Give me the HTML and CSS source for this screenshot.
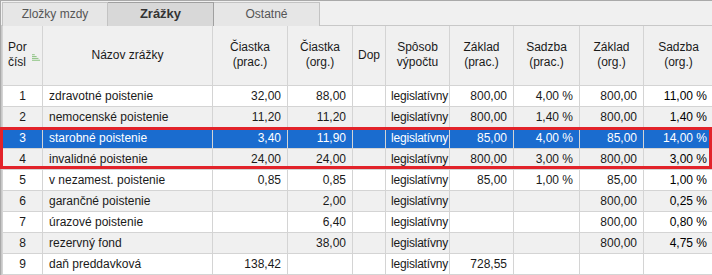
FILE: index.html
```html
<!DOCTYPE html>
<html lang="sk">
<head>
<meta charset="UTF-8" />
<title>Zrážky</title>
<link rel="stylesheet" href="styles.css">
</head>
<body>
  <div class="panel">
    <div class="tabs">
      <div class="tab"><span class="tab-label">Zložky mzdy</span></div>
      <div class="tab tab-active"><span class="tab-label">Zrážky</span></div>
      <div class="tab"><span class="tab-label">Ostatné</span></div>
    </div>

    <div class="grid-wrap">
      <table class="grid">
        <colgroup>
          <col class="c-por"><col class="c-name"><col class="c-amt1"><col class="c-amt2"><col class="c-dop">
          <col class="c-way"><col class="c-base1"><col class="c-rate1"><col class="c-base2"><col class="c-rate2">
        </colgroup>
        <thead>
          <tr>
            <th class="th-por">
              <div class="por-inner">
                <span>Por<br>čísl</span>
                <svg class="sort-icon" width="9" height="7" viewBox="0 0 9 7">
                  <path d="M0 0.5h3M0 2.5h5M0 4.5h7M0 6.5h9" stroke="#86c07a" stroke-width="1" />
                </svg>
              </div>
            </th>
            <th>Názov zrážky</th>
            <th>Čiastka<br>(prac.)</th>
            <th>Čiastka<br>(org.)</th>
            <th>Dop</th>
            <th>Spôsob<br>výpočtu</th>
            <th>Základ<br>(prac.)</th>
            <th>Sadzba<br>(prac.)</th>
            <th>Základ<br>(org.)</th>
            <th>Sadzba<br>(org.)</th>
          </tr>
        </thead>
        <tbody>
          <tr>
            <td class="num-c">1</td><td>zdravotné poistenie</td><td class="num">32,00</td><td class="num">88,00</td><td></td>
            <td class="way">legislatívny</td><td class="num">800,00</td><td class="num">4,00 %</td><td class="num">800,00</td><td class="num dark">11,00 %</td>
          </tr>
          <tr class="alt">
            <td class="num-c">2</td><td>nemocenské poistenie</td><td class="num">11,20</td><td class="num">11,20</td><td></td>
            <td class="way">legislatívny</td><td class="num">800,00</td><td class="num">1,40 %</td><td class="num">800,00</td><td class="num dark">1,40 %</td>
          </tr>
          <tr class="selected">
            <td class="num-c">3</td><td>starobné poistenie</td><td class="num">3,40</td><td class="num">11,90</td><td></td>
            <td class="way">legislatívny</td><td class="num">85,00</td><td class="num">4,00 %</td><td class="num">85,00</td><td class="num">14,00 %</td>
          </tr>
          <tr class="alt">
            <td class="num-c">4</td><td>invalidné poistenie</td><td class="num">24,00</td><td class="num">24,00</td><td></td>
            <td class="way">legislatívny</td><td class="num">800,00</td><td class="num">3,00 %</td><td class="num">800,00</td><td class="num dark">3,00 %</td>
          </tr>
          <tr>
            <td class="num-c">5</td><td>v nezamest. poistenie</td><td class="num">0,85</td><td class="num">0,85</td><td></td>
            <td class="way">legislatívny</td><td class="num">85,00</td><td class="num">1,00 %</td><td class="num">85,00</td><td class="num dark">1,00 %</td>
          </tr>
          <tr class="alt">
            <td class="num-c">6</td><td>garančné poistenie</td><td></td><td class="num">2,00</td><td></td>
            <td class="way">legislatívny</td><td></td><td></td><td class="num">800,00</td><td class="num dark">0,25 %</td>
          </tr>
          <tr>
            <td class="num-c">7</td><td>úrazové poistenie</td><td></td><td class="num">6,40</td><td></td>
            <td class="way">legislatívny</td><td></td><td></td><td class="num">800,00</td><td class="num dark">0,80 %</td>
          </tr>
          <tr class="alt">
            <td class="num-c">8</td><td>rezervný fond</td><td></td><td class="num">38,00</td><td></td>
            <td class="way">legislatívny</td><td></td><td></td><td class="num">800,00</td><td class="num dark">4,75 %</td>
          </tr>
          <tr>
            <td class="num-c">9</td><td>daň preddavková</td><td class="num">138,42</td><td></td><td></td>
            <td class="way">legislatívny</td><td class="num">728,55</td><td></td><td></td><td></td>
          </tr>
        </tbody>
      </table>
      <div class="mark"></div>
    </div>
  </div>
</body>
</html>
```

FILE: styles.css
```css
* {
  box-sizing: border-box;
}
body {
  margin: 0;
  background: #ffffff;
  font-family: "Liberation Sans", Tahoma, Arial, sans-serif;
  font-size: 12px;
  color: #1a1a1a;
  overflow: hidden;
}

/* Tabs */
.panel {
  width: 712px;
  border-top: 1px solid #a9a9a9;
  border-left: 1px solid #a9a9a9;
}
.tabs {
  display: flex;
  height: 25px;
  padding: 1px 0 0 1px;
  background: #f0f0f0;
  border-bottom: 1px solid #c8c8c8;
}
.tab {
  flex: 0 0 106px;
  height: 24px;
  line-height: 22px;
  text-align: center;
  white-space: nowrap;
  background: #e6e6e6;
  border: 1px solid #c3c3c3;
  border-bottom: none;
  color: #555555;
  font-size: 12px;
}
.tab + .tab {
  border-left: none;
}
.tab-active {
  background: #d8d8d8;
  border-top: 1px solid #a0a0a0;
  border-left: 1px solid #a0a0a0;
  border-right: 1px solid #a0a0a0;
  color: #333333;
  font-weight: bold;
  font-size: 13px;
}

/* Grid */
.grid-wrap {
  position: relative;
  border-left: 1px solid #c8c8c8;
}
.grid {
  width: 711px;
  border-collapse: collapse;
  table-layout: fixed;
}
.c-por { width: 40px; }
.c-name { width: 170px; }
.c-amt1 { width: 75px; }
.c-amt2 { width: 65px; }
.c-dop { width: 33px; }
.c-way { width: 64px; }
.c-base1 { width: 64px; }
.c-rate1 { width: 66px; }
.c-base2 { width: 64px; }
.c-rate2 { width: 70px; }

.grid th {
  height: 59px;
  background: #f0f0f0;
  font-weight: normal;
  line-height: 15px;
  color: #1a1a1a;
  border: 1px solid #d4d4d4;
  border-top: none;
  padding: 0 2px;
  text-align: center;
}
.grid th.th-por {
  text-align: left;
  padding-left: 5px;
}
.por-inner {
  display: flex;
  align-items: center;
  gap: 5px;
}
.sort-icon {
  margin-top: 4px;
}
.grid td {
  height: 21px;
  padding: 0 6px;
  border: 1px solid #d4d4d4;
  white-space: nowrap;
  overflow: hidden;
  color: #1a1a1a;
}
.grid td.way {
  padding: 0 0 0 5px;
  letter-spacing: -0.2px;
  overflow: visible;
}
.grid tr.alt td {
  background: #f0f0f0;
}
.grid td.num {
  text-align: right;
  padding-right: 6px;
}
.grid td.num-c {
  text-align: center;
}
.grid td.dark {
  color: #000000;
}
.grid tr.selected td {
  background: #1a6ccf;
  color: #ffffff;
}

/* Red highlight around selected rows */
.mark {
  position: absolute;
  left: -2px;
  top: 101px;
  width: 712px;
  height: 42px;
  border: 3px solid #e2232a;
  pointer-events: none;
}
```
